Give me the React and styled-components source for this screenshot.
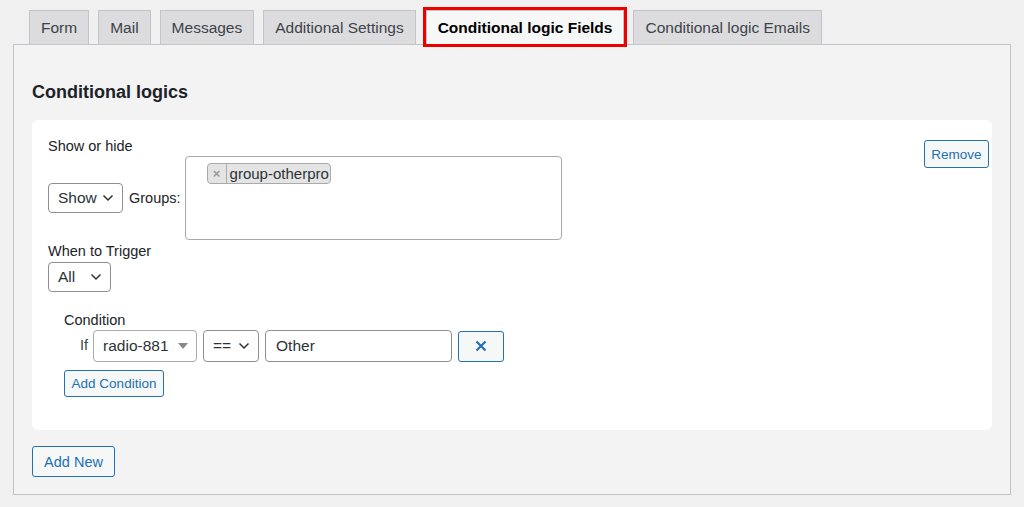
import React from 'react';
import styled, { createGlobalStyle } from 'styled-components';

const GlobalStyle = createGlobalStyle`
  body {
    margin: 0;
    background: #f0f0f1;
    font-family: "Liberation Sans", Arial, sans-serif;
    color: #1d2327;
  }
`;

const Page = styled.div`
  padding: 10px 0 0 13px;
  width: 998px;
`;

const Tabs = styled.div`
  display: flex;
  gap: 9px;
  padding-left: 16px;
  align-items: flex-end;
`;

const Tab = styled.div`
  height: 34px;
  box-sizing: border-box;
  padding: 0 11px;
  display: flex;
  align-items: center;
  font-size: 15.5px;
  background: ${(p) => (p.$active ? '#f6f7f7' : '#dcdcde')};
  color: ${(p) => (p.$active ? '#000' : '#3c434a')};
  font-weight: ${(p) => (p.$active ? 700 : 400)};
  border: 1px solid #c3c4c7;
  border-bottom: none;
  outline: ${(p) => (p.$active ? '3px solid #ee0000' : 'none')};
  position: relative;
  z-index: ${(p) => (p.$active ? 1 : 0)};
  margin-left: ${(p) => (p.$active ? '1px' : '0')};
`;

const Panel = styled.div`
  border: 1px solid #c3c4c7;
  background: #f3f3f3;
  padding: 35px 18px 17px 18px;
  box-sizing: border-box;
  width: 998px;
`;

const Heading = styled.h2`
  margin: 0 0 16px;
  font-size: 18px;
  line-height: 24px;
  font-weight: 700;
  color: #1d2327;
`;

const Card = styled.div`
  background: #fff;
  border-radius: 6px;
  width: 960px;
  box-sizing: border-box;
  padding: 16px 3px 33px 16px;
  display: flex;
  justify-content: space-between;
  align-items: flex-start;
`;

const Fields = styled.div`
  display: flex;
  flex-direction: column;
`;

const Label = styled.div`
  font-size: 14.5px;
  line-height: 20px;
  color: #1d2327;
  margin-top: ${(p) => p.$mt || 0}px;
`;

const Row = styled.div`
  display: flex;
  align-items: center;
  gap: ${(p) => p.$gap || 6}px;
  margin-top: ${(p) => p.$mt || 0}px;
`;

const SelectBox = styled.div`
  width: ${(p) => p.$w}px;
  height: ${(p) => p.$h || 30}px;
  box-sizing: border-box;
  border: 1px solid #8c8f94;
  border-radius: 4px;
  background: #fff;
  display: flex;
  align-items: center;
  justify-content: space-between;
  padding: 0 8px 0 9px;
  font-size: 15.5px;
  color: #2c3338;
`;

const Chevron = () => (
  <svg width="12" height="8" viewBox="0 0 12 8" fill="none">
    <path d="M1.5 1.5 L6 6 L10.5 1.5" stroke="#2c3338" strokeWidth="1.5" />
  </svg>
);

const Select2Box = styled(SelectBox)`
  border-color: #aaa;
`;

const Caret = styled.span`
  width: 0;
  height: 0;
  border-left: 5px solid transparent;
  border-right: 5px solid transparent;
  border-top: 6px solid #888;
`;

const GroupsLabel = styled.span`
  font-size: 14.5px;
  color: #1d2327;
  margin-right: -2px;
`;

const MultiBox = styled.div`
  width: 377px;
  height: 84px;
  box-sizing: border-box;
  border: 1px solid #aaa;
  border-radius: 4px;
  background: #fff;
  padding: 6px 0 0 21px;
`;

const Tag = styled.span`
  display: inline-flex;
  align-items: stretch;
  height: 21px;
  box-sizing: border-box;
  border: 1px solid #aaa;
  border-radius: 4px;
  background: #e4e4e4;
  font-size: 15px;
  color: #2c3338;
  overflow: hidden;
`;

const TagX = styled.span`
  width: 18px;
  display: flex;
  align-items: center;
  justify-content: center;
  color: #999;
  font-size: 13px;
  font-weight: 700;
  border-right: 1px solid #aaa;
`;

const TagText = styled.span`
  display: flex;
  align-items: center;
  padding: 0 1px 0 3px;
`;

const Condition = styled.div`
  margin: 18px 0 0 16px;
  display: flex;
  flex-direction: column;
`;

const IfLabel = styled.span`
  font-size: 14.5px;
  color: #3c434a;
  margin: 0 -1px 2px 16px;
`;

const TextInput = styled.div`
  width: 187px;
  height: 32px;
  box-sizing: border-box;
  border: 1px solid #8c8f94;
  border-radius: 4px;
  background: #fff;
  display: flex;
  align-items: center;
  padding: 0 10px;
  font-size: 15.5px;
  color: #2c3338;
`;

const Button = styled.button`
  font-family: inherit;
  box-sizing: border-box;
  width: ${(p) => p.$w}px;
  height: ${(p) => p.$h}px;
  font-size: ${(p) => p.$fs || 13}px;
  color: #2271b1;
  border: 1px solid #2271b1;
  border-radius: 3px;
  background: #f6f7f7;
  padding: 0;
  display: flex;
  align-items: center;
  justify-content: center;
  margin-top: ${(p) => p.$mt || 0}px;
  cursor: pointer;
`;

export default function App() {
  return (
    <>
      <GlobalStyle />
      <Page>
        <Tabs>
          <Tab>Form</Tab>
          <Tab>Mail</Tab>
          <Tab>Messages</Tab>
          <Tab>Additional Settings</Tab>
          <Tab $active>Conditional logic Fields</Tab>
          <Tab>Conditional logic Emails</Tab>
        </Tabs>
        <Panel>
          <Heading>Conditional logics</Heading>
          <Card>
            <Fields>
              <Label>Show or hide</Label>
              <Row $gap={6}>
                <SelectBox $w={75}>
                  Show <Chevron />
                </SelectBox>
                <GroupsLabel>Groups:</GroupsLabel>
                <MultiBox>
                  <Tag>
                    <TagX>×</TagX>
                    <TagText>group-otherpro</TagText>
                  </Tag>
                </MultiBox>
              </Row>
              <Label $mt={1}>When to Trigger</Label>
              <Row $mt={1}>
                <SelectBox $w={63}>
                  All <Chevron />
                </SelectBox>
              </Row>
              <Condition>
                <Label>Condition</Label>
                <Row $gap={6}>
                  <IfLabel>If</IfLabel>
                  <Select2Box $w={104} $h={32}>
                    radio-881 <Caret />
                  </Select2Box>
                  <SelectBox $w={56} $h={32}>
                    == <Chevron />
                  </SelectBox>
                  <TextInput>Other</TextInput>
                  <Button $w={46} $h={31} $fs={18}>
                    <svg width="12" height="12" viewBox="0 0 12 12">
                      <path d="M1.5 1.5 L10.5 10.5 M10.5 1.5 L1.5 10.5" stroke="#2271b1" strokeWidth="2.2" />
                    </svg>
                  </Button>
                </Row>
                <Button $w={100} $h={27} $mt={8} $fs={13.5}>Add Condition</Button>
              </Condition>
            </Fields>
            <Button $w={65} $h={28} $mt={4} $fs={13.5}>Remove</Button>
          </Card>
          <Button $w={83} $h={31} $fs={14.5} $mt={16}>Add New</Button>
        </Panel>
      </Page>
    </>
  );
}
